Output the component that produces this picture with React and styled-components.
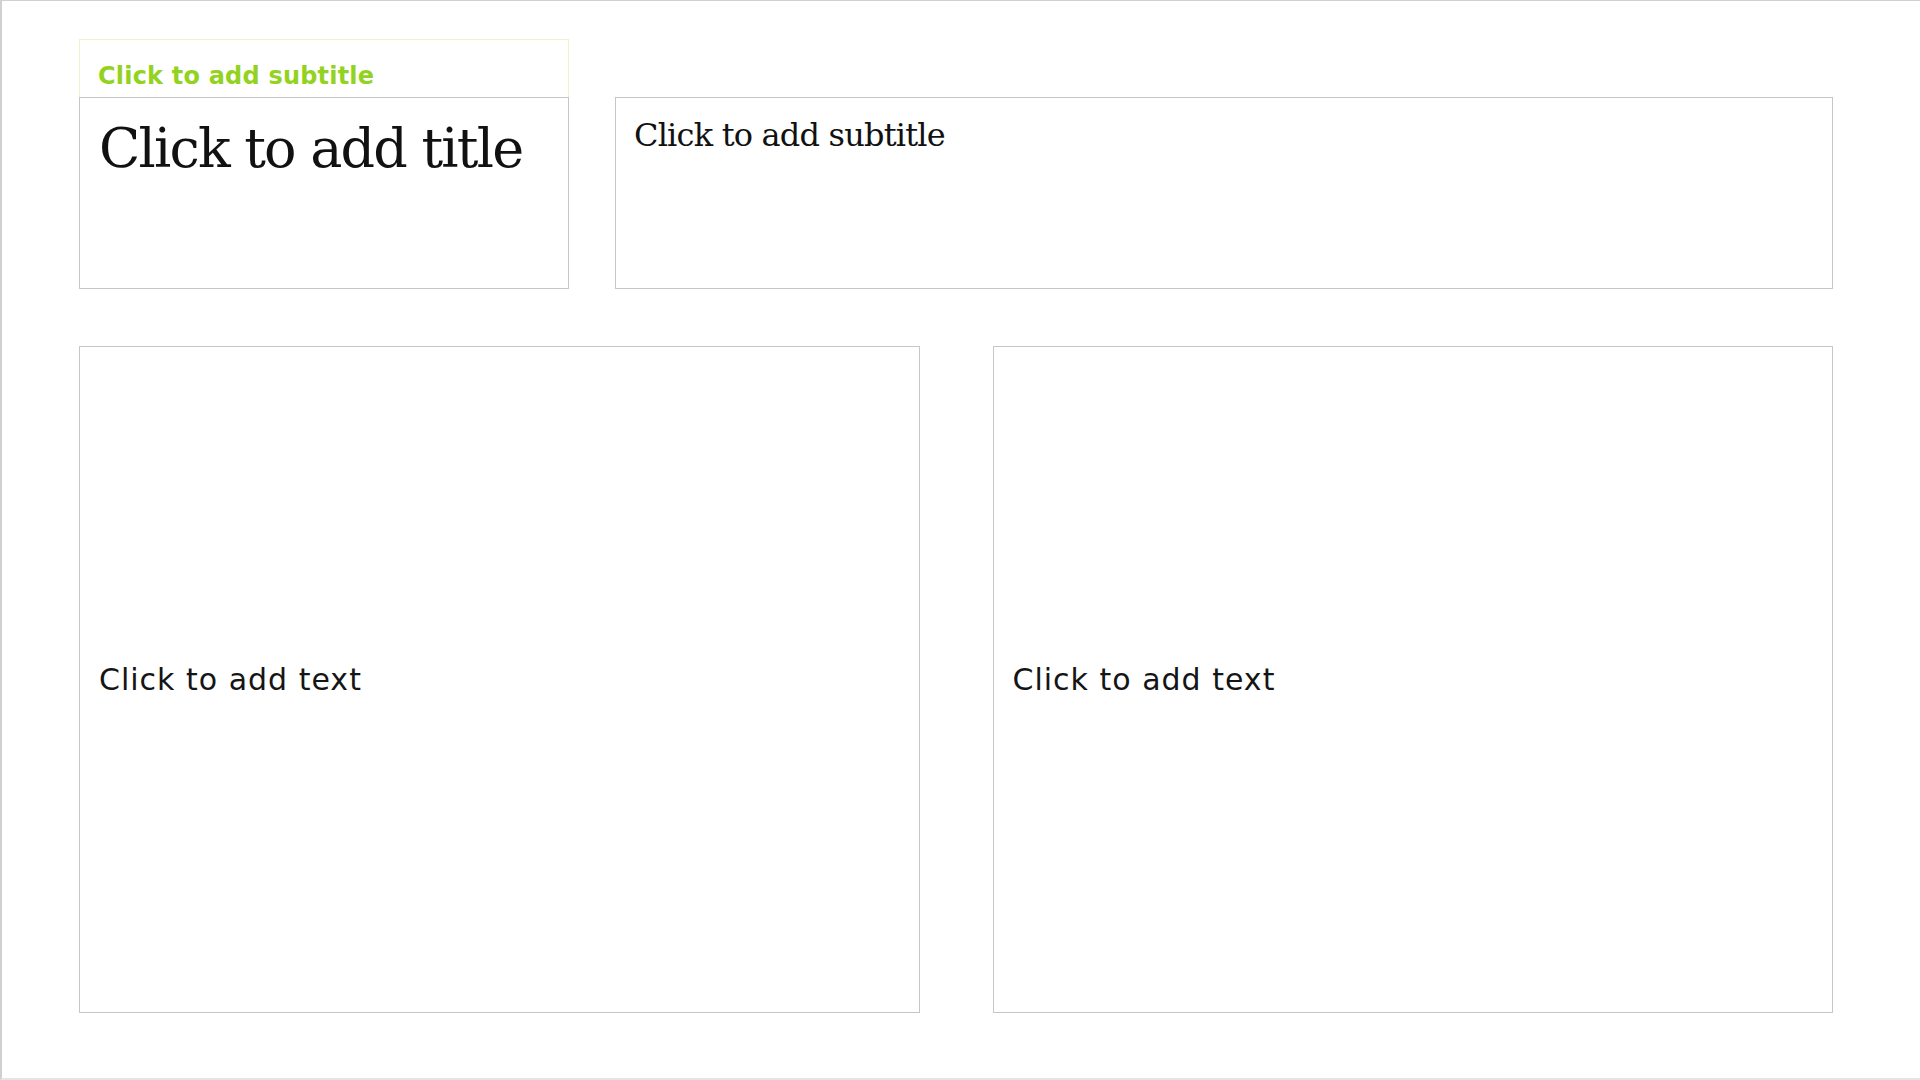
import React from 'react'
import styled, { createGlobalStyle } from 'styled-components'

const GlobalStyle = createGlobalStyle`
  html, body {
    margin: 0;
    padding: 0;
    background: #ffffff;
  }
`

const Slide = styled.div`
  box-sizing: border-box;
  width: 1920px;
  height: 1080px;
  border-top: 1px solid #d0d0d0;
  border-left: 2px solid #d0d0d0;
  border-bottom: 2px solid #e4e4e4;
  padding: 38px 87px 0 77px;
  background: #fff;
  display: flex;
  flex-direction: column;
  gap: 57px;
`

const TopRow = styled.div`
  display: flex;
  gap: 46px;
  align-items: flex-end;
`

const TitleColumn = styled.div`
  display: flex;
  flex-direction: column;
  width: 490px;
  flex-shrink: 0;
`

const Placeholder = styled.div`
  box-sizing: border-box;
  border: 1px solid #c6c6c6;
  background: #fff;
`

const SubtitleTag = styled.div`
  box-sizing: border-box;
  height: 62px;
  border: 1px solid #ebf5cc;
  padding: 22px 18px 0;
  font-family: 'DejaVu Sans', sans-serif;
  font-weight: 700;
  font-size: 24px;
  letter-spacing: 0.2px;
  line-height: 1.2;
  color: #93d31f;
`

const TitleBox = styled(Placeholder)`
  height: 192px;
  margin-top: -4px;
  padding: 19px 19px 0;
`

const SubtitleBox = styled(Placeholder)`
  flex: 1;
  height: 192px;
  padding: 18px 18px 0;
`

const SerifText = styled.div`
  font-family: 'DejaVu Serif', serif;
  font-size: ${p => p.size}px;
  letter-spacing: ${p => p.spacing}px;
  line-height: 1.2;
  color: #111;
  white-space: nowrap;
`

const ContentGrid = styled.div`
  display: grid;
  grid-template-columns: 1fr 1fr;
  gap: 73px;
`

const ContentBox = styled(Placeholder)`
  height: 667px;
  display: flex;
  align-items: center;
  padding: 0 19px;
  font-family: 'DejaVu Sans', sans-serif;
  font-size: 30px;
  letter-spacing: 1px;
  color: #151515;
`

const App = () => (
  <>
    <GlobalStyle />
    <Slide>
      <TopRow>
        <TitleColumn>
          <SubtitleTag>Click to add subtitle</SubtitleTag>
          <TitleBox>
            <SerifText size={54} spacing={-1.8}>Click to add title</SerifText>
          </TitleBox>
        </TitleColumn>
        <SubtitleBox>
          <SerifText size={32} spacing={-0.8}>Click to add subtitle</SerifText>
        </SubtitleBox>
      </TopRow>
      <ContentGrid>
        <ContentBox>Click to add text</ContentBox>
        <ContentBox>Click to add text</ContentBox>
      </ContentGrid>
    </Slide>
  </>
)

export default App
